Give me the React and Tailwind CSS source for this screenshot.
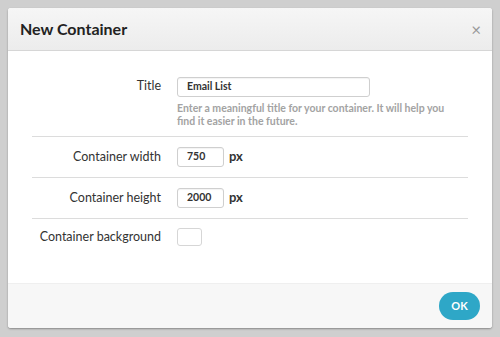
export default function App() {
  const font = { fontFamily: 'Lato, "Open Sans", sans-serif' };
  return (
    <div className="w-[500px] h-[337px] bg-[#cfcfcf] p-2" style={font}>
      <div className="w-[484px] h-[320px] bg-white rounded-[3px] shadow-[0_1px_2px_rgba(0,0,0,0.35)] flex flex-col overflow-hidden">
        {/* Header */}
        <div className="h-[43px] flex items-center justify-between pl-3 pr-[11px] bg-gradient-to-b from-[#f6f6f6] to-[#ececec] border-b border-[#d6d6d6]">
          <h2 className="text-[16px] font-bold text-[#222]">New Container</h2>
          <span className="text-[17px] leading-none text-[#999]">×</span>
        </div>

        {/* Body */}
        <div className="flex-1 px-6 pt-[26px] text-[#333]">
          <div className="grid grid-cols-[129px_1fr] gap-x-4 pb-[8px] border-b border-[#dcdcdc]">
            <label className="text-right text-[12.5px] whitespace-nowrap">Title</label>
            <div>
              <div className="w-[193px] h-[20px] border border-[#cfcfcf] rounded-[3px] flex items-center pl-[9px] text-[10.5px] font-bold shadow-[inset_0_1px_1px_rgba(0,0,0,0.05)]">
                Email List
              </div>
              <p className="mt-[5px] pr-[10px] text-[10.5px] leading-[13px] font-bold text-[#a3a3a3]">
                Enter a meaningful title for your container. It will help you find it easier in the future.
              </p>
            </div>
          </div>

          {[
            ['Container width', '750'],
            ['Container height', '2000'],
          ].map(([label, value]) => (
            <div key={label} className="grid grid-cols-[129px_1fr] gap-x-4 items-center py-[10px] border-b border-[#dcdcdc]">
              <label className="text-right text-[12.5px] whitespace-nowrap">{label}</label>
              <div className="flex items-center gap-[5px]">
                <div className="w-[47px] h-[20px] border border-[#cfcfcf] rounded-[3px] flex items-center pl-[9px] text-[10.5px] font-bold shadow-[inset_0_1px_1px_rgba(0,0,0,0.05)]">
                  {value}
                </div>
                <span className="text-[13px] font-bold">px</span>
              </div>
            </div>
          ))}

          <div className="grid grid-cols-[129px_1fr] gap-x-4 items-center pt-[9px]">
            <label className="text-right text-[12.5px] whitespace-nowrap">Container background</label>
            <div className="w-[25px] h-[18px] border border-[#d6d6d6] rounded-[3px]" />
          </div>
        </div>

        {/* Footer */}
        <div className="h-[45px] bg-[#f7f7f7] border-t border-[#efefef] flex items-center justify-end pr-3">
          <button className="w-[41px] h-[28px] rounded-full bg-[#2ea7c7] text-white text-[11px] font-bold">OK</button>
        </div>
      </div>
    </div>
  );
}
